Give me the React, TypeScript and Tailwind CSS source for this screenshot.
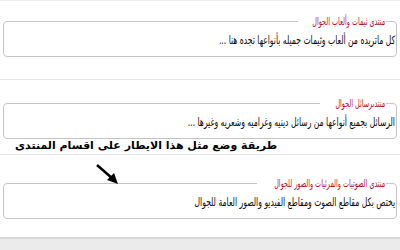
import React from "react";

const ar = { fontFamily: '"DejaVu Sans Condensed", "DejaVu Sans", sans-serif' };
const ar2 = { fontFamily: '"DejaVu Sans", sans-serif' };

function Box({ title, body, lw }: { title: string; body: string; lw: string }) {
  return (
    <fieldset
      dir="rtl"
      className="mx-[3px] rounded-[4px] border border-[#c4c4c4] pb-[8px] pl-2 pr-[1px]"
      style={ar}
    >
      <legend className={`mr-[9px] px-[1px] text-[10.5px] leading-[14px] text-[#b0102e] font-stretch-condensed ${lw}`}>
        <span className="inline-block origin-right scale-x-[0.68] whitespace-nowrap">{title}</span>
      </legend>
      <div className="whitespace-nowrap pt-[4px] text-[11.5px] leading-[16px] text-[#0a0a0a] font-stretch-condensed">
        <span className="inline-block origin-right scale-x-[0.74]">{body}</span>
      </div>
    </fieldset>
  );
}

export default function App() {
  return (
    <div className="relative h-[250px] w-[400px] overflow-hidden bg-white">
      <div className="h-[79px] border-t border-[#ececec] pt-[13px]">
        <Box
          lw="w-[88px]"
          title="منتدى ثيمات وألعاب الجوال"
          body="كل ماتريده من ألعاب وثيمات جميله بأنواعها تجده هنا ..."
        />
      </div>
      <div className="h-[75px] border-t border-[#e6e6e6] pt-[16px]">
        <Box
          lw="w-[66px]"
          title="منتدىرسائل الجوال"
          body="الرسائل بجميع أنواعها من رسائل دينيه وغراميه وشعريه وغيرها ..."
        />
      </div>
      <div className="h-[83px] border-t border-[#e6e6e6] pt-[21px]">
        <Box
          lw="w-[129px]"
          title="منتدى الصوتيات والمرئيات والصور للجوال"
          body="يختص بكل مقاطع الصوت ومقاطع الفيديو والصور العامة للجوال"
        />
      </div>
      <div className="h-[13px] border-t-2 border-[#d8d8d8] bg-[#ebebeb]" />
      <div
        dir="rtl"
        className="absolute left-[15px] top-[139px] text-[11px] font-bold leading-[14px] text-black"
        style={ar2}
      >
        طريقة وضع مثل هذا الايطار على اقسام المنتدى
      </div>
      <svg className="absolute left-[90px] top-[160px]" width="34" height="30" viewBox="0 0 34 30">
        <line x1="7" y1="5" x2="23" y2="19" stroke="#000" strokeWidth="2.5" />
        <polygon points="28,24 17,20 24,13" fill="#000" />
      </svg>
    </div>
  );
}
